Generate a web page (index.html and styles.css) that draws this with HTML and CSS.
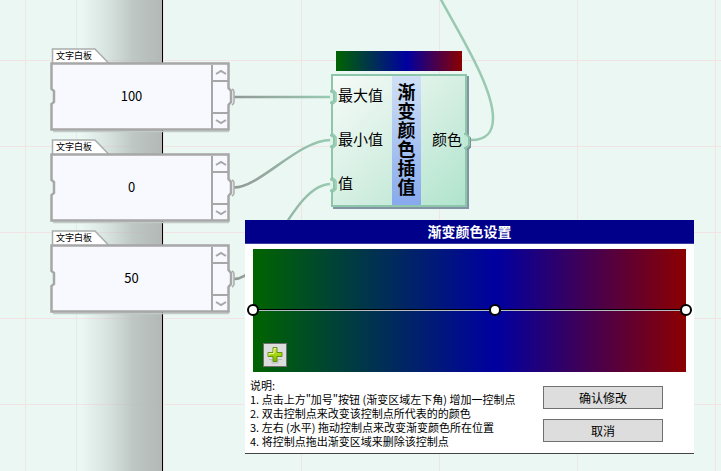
FILE: index.html
```html
<!DOCTYPE html>
<html lang="zh-CN">
<head>
<meta charset="utf-8">
<title>渐变颜色插值</title>
<link rel="stylesheet" href="styles.css">
</head>
<body>
<svg class="defs" aria-hidden="true">
  <symbol id="board-frame" viewBox="0 0 186 86">
    <path d="M3 83.500H179" stroke="#c2c9c6" stroke-width="1.500"/>
    <path d="M2.500 16V1H45L59 15.500" fill="#fff" stroke="#a9adab" stroke-width="1.500"/>
    <path d="M1.500 15.500H178.500V40L181 43V54L178.500 57V81.500H1.500V56L4 54V43L1.500 41Z" fill="#f8f9ff" stroke="#a7a7a7" stroke-width="2.500"/>
    <path d="M182 41Q184 42 184 44V54Q184 56 182 57" fill="none" stroke="#a9acad" stroke-width="1.500"/>
  </symbol>
  <symbol id="port-in" viewBox="0 0 8 16">
    <path d="M0 2L4 4V12L0 14" fill="#dff2e8" stroke="#8dc6aa" stroke-width="2"/>
    <path d="M3 1L6 4V12L3 15" fill="none" stroke="#8dc6aa" stroke-width="1.5"/>
  </symbol>
</svg>
<main class="canvas">
  <div class="strip"></div>
  <svg class="wires" aria-hidden="true">
    <defs>
      <linearGradient id="wire" gradientUnits="userSpaceOnUse" x1="234" y1="0" x2="331" y2="0">
        <stop offset="0" stop-color="#929895"/>
        <stop offset="1" stop-color="#98ccb3"/>
      </linearGradient>
    </defs>
    <g fill="none" stroke="url(#wire)" stroke-width="2.5">
      <path d="M234 97L331 97.010"/>
      <path d="M234 187.500C260 187.500 298 140 331 140"/>
      <path d="M234 279C268 279 292 184 331 184"/>
      <path d="M471 140C489 140 493 130 493 118C493 87 460 35 439 -4" stroke="#99c9b2"/>
    </g>
  </svg>

  <section class="board board-max">
    <svg class="frame" aria-hidden="true"><use href="#board-frame"/></svg>
    <label class="tab" for="max">文字白板</label>
    <div class="board-body">
      <input id="max" type="text" value="100">
      <div class="scroller">
        <button type="button" aria-label="向上"><svg viewBox="0 0 12 7"><path d="M1 5L6 2L11 5"/></svg></button>
        <button type="button" aria-label="向下"><svg viewBox="0 0 12 7"><path d="M1 2L6 5L11 2"/></svg></button>
      </div>
    </div>
  </section>
  <section class="board board-min">
    <svg class="frame" aria-hidden="true"><use href="#board-frame"/></svg>
    <label class="tab" for="min">文字白板</label>
    <div class="board-body">
      <input id="min" type="text" value="0">
      <div class="scroller">
        <button type="button" aria-label="向上"><svg viewBox="0 0 12 7"><path d="M1 5L6 2L11 5"/></svg></button>
        <button type="button" aria-label="向下"><svg viewBox="0 0 12 7"><path d="M1 2L6 5L11 2"/></svg></button>
      </div>
    </div>
  </section>
  <section class="board board-value">
    <svg class="frame" aria-hidden="true"><use href="#board-frame"/></svg>
    <label class="tab" for="value">文字白板</label>
    <div class="board-body">
      <input id="value" type="text" value="50">
      <div class="scroller">
        <button type="button" aria-label="向上"><svg viewBox="0 0 12 7"><path d="M1 5L6 2L11 5"/></svg></button>
        <button type="button" aria-label="向下"><svg viewBox="0 0 12 7"><path d="M1 2L6 5L11 2"/></svg></button>
      </div>
    </div>
  </section>

  <section class="node">
    <div class="preview"></div>
    <div class="node-body">
      <ul class="inputs">
        <li><svg class="port" aria-hidden="true"><use href="#port-in"/></svg>最大值</li>
        <li><svg class="port" aria-hidden="true"><use href="#port-in"/></svg>最小值</li>
        <li><svg class="port" aria-hidden="true"><use href="#port-in"/></svg>值</li>
      </ul>
      <h2>渐变颜色插值</h2>
      <div class="output">颜色
        <svg class="port-out" viewBox="0 0 8 18" aria-hidden="true">
          <path d="M4 3L7 5V14L4 17" fill="none" stroke="#7b8e9f" stroke-width="2"/>
          <path d="M1 1H3L6 4V12L3 15H1" fill="#c3e7d5" stroke="#8dc6aa" stroke-width="2"/>
        </svg>
      </div>
    </div>
  </section>

  <section class="dialog" role="dialog" aria-labelledby="dialog-title">
    <h1 id="dialog-title">渐变颜色设置</h1>
    <div class="ramp">
      <button class="stop stop-start" type="button" aria-label="控制点 1"></button>
      <button class="stop stop-middle" type="button" aria-label="控制点 2"></button>
      <button class="stop stop-end" type="button" aria-label="控制点 3"></button>
      <button class="add" type="button" aria-label="增加控制点">
        <svg viewBox="0 0 18 18" aria-hidden="true">
          <defs><linearGradient id="plus" x2="0" y2="1"><stop offset="0" stop-color="#d5e84c"/><stop offset=".5" stop-color="#a6d512"/><stop offset="1" stop-color="#74b800"/></linearGradient></defs>
          <path d="M3 13.500H6V17H12V13.500H16" fill="none" stroke="#bbb"/>
          <path d="M7 1.500H11V6.500H16V10.500H11V15.500H7V10.500H2V6.500H7Z" fill="url(#plus)" stroke="#62920f" stroke-linejoin="round"/>
          <path d="M8 7V2.500H10M3 9.500V7.500H8" fill="none" stroke="#edf5a2"/>
        </svg>
      </button>
    </div>
    <div class="dialog-footer">
      <div class="help">
        <p>说明:</p>
        <p>1. 点击上方"加号"按钮 (渐变区域左下角) 增加一控制点</p>
        <p>2. 双击控制点来改变该控制点所代表的的颜色</p>
        <p>3. 左右 (水平) 拖动控制点来改变渐变颜色所在位置</p>
        <p>4. 将控制点拖出渐变区域来删除该控制点</p>
      </div>
      <div class="actions">
        <button type="button">确认修改</button>
        <button type="button">取消</button>
      </div>
    </div>
  </section>
</main>
</body>
</html>
```
FILE: styles.css
```css
* {
  box-sizing: border-box;
}

body {
  margin: 0;
  color: #000;
  font-family: "Noto Sans CJK SC", sans-serif;
}

h1, h2, p, ul {
  margin: 0;
  padding: 0;
}

button, input {
  margin: 0;
  padding: 0;
  font: inherit;
  color: inherit;
}

.defs {
  position: absolute;
  width: 0;
  height: 0;
}

.canvas {
  position: relative;
  min-height: 100vh;
  overflow: hidden;
  background-color: #eaf7f3;
  background-image:
    linear-gradient(#f2e4e4 1px, transparent 1px),
    linear-gradient(90deg, #f2e4e4 1px, transparent 1px);
  background-size: 138px 86px, 138px 86px;
  background-position: 0 60px, 25px 0;
}

.strip {
  position: absolute;
  top: 0;
  bottom: 0;
  left: 76px;
  width: 87px;
  border-left: 1px solid #e0ece8;
  border-right: 1px solid #000;
  background: linear-gradient(90deg, rgba(176, 182, 180, 0) 5%, rgba(176, 184, 181, 0.3) 35%, rgba(176, 184, 181, 0.75) 65%, #b2b8b6 100%);
}

.wires {
  position: absolute;
  top: 0;
  left: 0;
  width: 100%;
  height: 100%;
}

.board {
  position: absolute;
  left: 50px;
  width: 180px;
}

.board-max { top: 48px; }
.board-min { top: 139px; }
.board-value { top: 230px; }

.frame {
  position: absolute;
  top: 0;
  left: 0;
  width: 186px;
  height: 86px;
}

.tab {
  position: relative;
  display: block;
  padding: 1px 0 0 6px;
  font-size: 9px;
  line-height: 14px;
}

.board-body {
  position: relative;
  display: flex;
  height: 68px;
  padding: 2px;
}

.board-body input {
  flex: 1;
  min-width: 0;
  padding-bottom: 3px;
  border: 0;
  background: transparent;
  font-size: 13px;
  text-align: center;
}

.scroller {
  display: flex;
  flex-direction: column;
  justify-content: space-between;
  width: 17px;
  border-left: 2px solid #a7a7a7;
}

.scroller button {
  display: grid;
  place-items: center;
  height: 17px;
  border: 0;
  background: transparent;
}

.scroller button:first-child { border-bottom: 2px solid #a7a7a7; }
.scroller button:last-child { border-top: 2px solid #a7a7a7; }

.scroller svg {
  width: 12px;
  height: 7px;
  fill: none;
  stroke: #a7a7a7;
  stroke-width: 2;
}

.node {
  position: absolute;
  top: 51px;
  left: 331px;
  width: 136px;
}

.preview {
  height: 20px;
  margin: 0 5px 3px;
  background: linear-gradient(90deg, #006400, #0000a0 56%, #8b0000);
}

.node-body {
  display: grid;
  grid-template-columns: 59px 29px 1fr;
  border: 2px solid #8dc6aa;
  background: linear-gradient(135deg, #f7fbf9, #d6efe3 50%, #b0e4cc);
  box-shadow: 2px 2px 0 #8295a5;
}

.inputs {
  display: flex;
  flex-direction: column;
  gap: 6px;
  padding-bottom: 3px;
  list-style: none;
  font-size: 15px;
}

.inputs li {
  position: relative;
  height: 38px;
  padding-left: 5px;
  line-height: 38px;
}

.port {
  position: absolute;
  top: 13px;
  left: -3px;
  width: 8px;
  height: 16px;
}

.node h2 {
  padding: 6px 5px 8px;
  background: linear-gradient(#d0e1f6, #87a9ed);
  font-size: 18px;
  line-height: 19px;
  text-align: center;
}

.output {
  position: relative;
  align-self: center;
  padding: 0 3px 4px 0;
  font-size: 15px;
  line-height: 20px;
  text-align: right;
}

.port-out {
  position: absolute;
  top: 4px;
  right: -6px;
  width: 8px;
  height: 18px;
}

.dialog {
  position: absolute;
  top: 220px;
  right: 27px;
  left: 245px;
  border-bottom: 1px solid #444;
  background: #fff;
}

.dialog h1 {
  border-bottom: 1px solid #3b3ba5;
  background: #00008b;
  color: #fff;
  font-size: 14px;
  line-height: 23px;
  text-align: center;
}

.ramp {
  position: relative;
  height: 123px;
  margin: 5px 8px 0;
  background:
    linear-gradient(#000, #000) center 60px / 100% 1px no-repeat,
    linear-gradient(#b4bcc6, #b4bcc6) center 61px / 100% 1px no-repeat,
    linear-gradient(90deg, #006400, #0000a0 56%, #8b0000);
}

.stop {
  position: absolute;
  top: 55px;
  width: 12px;
  height: 12px;
  margin-left: -6px;
  border: 2px solid #000;
  border-radius: 50%;
  background: #fff;
}

.stop-start { left: 0; }
.stop-middle { left: 56%; }
.stop-end { left: 100%; }

.add {
  position: absolute;
  bottom: 5px;
  left: 10px;
  display: grid;
  place-items: center;
  width: 24px;
  height: 24px;
  border: 1px solid #707070;
  background: #ddd;
}

.add svg {
  width: 18px;
  height: 18px;
}

.dialog-footer {
  display: flex;
  justify-content: space-between;
  padding: 6px 31px 5px 5px;
}

.help {
  font-size: 11px;
  line-height: 14px;
}

.actions {
  display: flex;
  flex-direction: column;
  gap: 10px;
  width: 120px;
  padding-top: 8px;
}

.actions button {
  height: 23px;
  border: 1px solid #707070;
  background: #ddd;
  font-size: 12px;
  line-height: 20px;
}
```
